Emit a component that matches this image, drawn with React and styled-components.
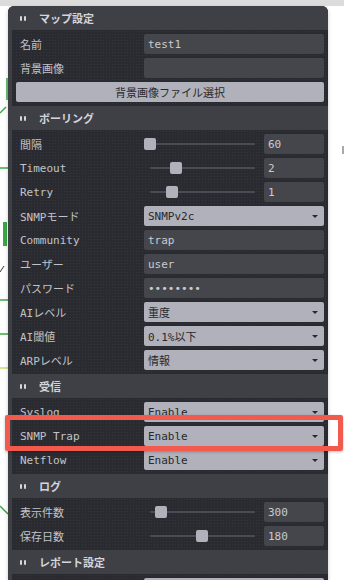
// Packages:
import React from 'react';
import styled, { createGlobalStyle } from 'styled-components';


// Constants:
const COLORS = {
  BASE: '#2a2b30',
  CONTAINER: '#3f4046',
  INPUT: '#45464c',
  BUTTON: '#b0b1ba',
  LABEL: '#c2c3c9',
  TEXT: '#c9cad0',
  TITLE: '#d4d5db',
  DARK: '#28292e',
  GROOVE: '#4b4c53',
  HIGHLIGHT: '#f35a4e',
};

const FONT = '"DejaVu Sans Mono", "Noto Sans CJK JP", monospace';


// Styles:
const GlobalStyle = createGlobalStyle`
  html, body {
    margin: 0;
    padding: 0;
    background: #ffffff;
  }
  * {
    box-sizing: border-box;
  }
`;

const Page = styled.div`
  position: relative;
  width: 344px;
  height: 580px;
  overflow: hidden;
  padding-top: 6px;
  background: linear-gradient(#dcdcdc 0 6px, #ffffff 6px);
  font-family: ${ FONT };
  font-size: 11px;
`;

const MapBackdrop = styled.svg`
  position: absolute;
  top: 0;
  left: 0;
  width: 344px;
  height: 580px;
`;

const Panel = styled.div`
  position: relative;
  width: 320px;
  margin-left: 8px;
  border-radius: 6px 6px 0 0;
  overflow: hidden;
  background: ${ COLORS.BASE };
  box-shadow: 0 2px 4px rgba(0, 0, 0, 0.2);
`;

const FolderHeader = styled.div`
  display: flex;
  align-items: center;
  height: 24px;
  padding-left: 12px;
  background: ${ COLORS.CONTAINER };
  color: ${ COLORS.TITLE };
  font-weight: 700;
`;

const FolderMark = styled.span`
  display: flex;
  gap: 2px;
  width: 6px;
  margin-right: 13px;

  &::before, &::after {
    content: '';
    width: 2px;
    height: 5px;
    border-radius: 1px;
    background: ${ COLORS.TITLE };
  }
`;

const FolderContent = styled.div`
  display: flex;
  flex-direction: column;
  gap: 4px;
  padding: 4px 0;
  border-left: 4px solid ${ COLORS.CONTAINER };
  background-color: ${ COLORS.BASE };
  background-image: radial-gradient(rgba(255, 255, 255, 0.05) 0.7px, transparent 0.9px);
  background-size: 3px 3px;
`;

const Row = styled.div`
  display: flex;
  align-items: center;
  height: 20px;
  padding: 0 4px 0 8px;
`;

const Label = styled.div`
  flex: 0 0 124px;
  color: ${ COLORS.LABEL };
  white-space: nowrap;
`;

const Value = styled.div`
  display: flex;
  align-items: center;
  flex: 1;
  height: 20px;
`;

const TextBox = styled.div`
  display: flex;
  align-items: center;
  width: ${ props => props.$width || '100%' };
  height: 20px;
  padding: 0 4px;
  border-radius: 2px;
  background: ${ COLORS.INPUT };
  color: ${ COLORS.TEXT };
  white-space: nowrap;
`;

const SelectBox = styled.div`
  display: flex;
  align-items: center;
  justify-content: space-between;
  width: 100%;
  height: 20px;
  padding: 0 6px 0 4px;
  border-radius: 2px;
  background: ${ COLORS.BUTTON };
  color: ${ COLORS.DARK };
  white-space: nowrap;
`;

const Arrow = styled.span`
  width: 0;
  height: 0;
  border-left: 3px solid transparent;
  border-right: 3px solid transparent;
  border-top: 3px solid ${ COLORS.DARK };
`;

const ButtonRow = styled.div`
  display: flex;
  height: 20px;
  padding: 0 4px;
`;

const Button = styled.div`
  display: flex;
  align-items: center;
  justify-content: center;
  width: 100%;
  border-radius: 2px;
  background: ${ COLORS.BUTTON };
  color: ${ COLORS.DARK };
`;

const Slider = styled.div`
  position: relative;
  width: 112px;
  height: 20px;
  margin-right: 8px;
`;

const Groove = styled.div`
  position: absolute;
  top: 9px;
  left: 6px;
  right: 1px;
  height: 2px;
  border-radius: 1px;
  background: ${ COLORS.GROOVE };
`;

const Knob = styled.div`
  position: absolute;
  top: 4px;
  left: calc(${ props => props.$pos } * (100% - 12px));
  width: 12px;
  height: 12px;
  border-radius: 2px;
  background: ${ COLORS.BUTTON };
`;

const Highlight = styled.div`
  position: absolute;
  top: 415px;
  left: 5px;
  width: 338px;
  height: 36px;
  border: 5px solid ${ COLORS.HIGHLIGHT };
  border-radius: 2px;
  box-shadow: 0 1px 3px rgba(0, 0, 0, 0.25);
`;


// Functions:
const Folder = ({ title, children }) => (
  <>
    <FolderHeader>
      <FolderMark />
      { title }
    </FolderHeader>
    <FolderContent>{ children }</FolderContent>
  </>
);

const TextRow = ({ label, value }) => (
  <Row>
    <Label>{ label }</Label>
    <Value><TextBox>{ value }</TextBox></Value>
  </Row>
);

const SelectRow = ({ label, value }) => (
  <Row>
    <Label>{ label }</Label>
    <Value>
      <SelectBox>{ value }<Arrow /></SelectBox>
    </Value>
  </Row>
);

const SliderRow = ({ label, value, pos }) => (
  <Row>
    <Label>{ label }</Label>
    <Value>
      <Slider>
        <Groove />
        <Knob $pos={ pos } />
      </Slider>
      <TextBox $width="60px">{ value }</TextBox>
    </Value>
  </Row>
);

const App = () => {
  // Return:
  return (
    <Page>
      <GlobalStyle />
      <MapBackdrop viewBox="0 0 344 580">
        <g stroke="#3aa845" strokeWidth="1.5" fill="none">
          <line x1="7" y1="78" x2="7" y2="100" />
          <line x1="0" y1="113" x2="6" y2="107" />
          <line x1="0" y1="168" x2="8" y2="168" />
          <line x1="5" y1="222" x2="5" y2="246" strokeWidth="4" />
          <line x1="0" y1="300" x2="8" y2="300" />
          <line x1="0" y1="334" x2="8" y2="334" />
          <line x1="6" y1="436" x2="6" y2="442" />
          <line x1="0" y1="506" x2="8" y2="514" />
        </g>
        <line x1="0" y1="368" x2="8" y2="368" stroke="#c9dc6a" strokeWidth="1.5" />
        <line x1="0" y1="272" x2="4" y2="266" stroke="#333" strokeWidth="1" />
        <line x1="343" y1="146" x2="343" y2="154" stroke="#555" strokeWidth="1" />
      </MapBackdrop>
      <Panel>
        <Folder title="マップ設定">
          <TextRow label="名前" value="test1" />
          <TextRow label="背景画像" value="" />
          <ButtonRow><Button>背景画像ファイル選択</Button></ButtonRow>
        </Folder>
        <Folder title="ボーリング">
          <SliderRow label="間隔" value="60" pos={ 0 } />
          <SliderRow label="Timeout" value="2" pos={ 0.26 } />
          <SliderRow label="Retry" value="1" pos={ 0.215 } />
          <SelectRow label="SNMPモード" value="SNMPv2c" />
          <TextRow label="Community" value="trap" />
          <TextRow label="ユーザー" value="user" />
          <TextRow label="パスワード" value="••••••••" />
          <SelectRow label="AIレベル" value="重度" />
          <SelectRow label="AI閾値" value="0.1%以下" />
          <SelectRow label="ARPレベル" value="情報" />
        </Folder>
        <Folder title="受信">
          <SelectRow label="Syslog" value="Enable" />
          <SelectRow label="SNMP Trap" value="Enable" />
          <SelectRow label="Netflow" value="Enable" />
        </Folder>
        <Folder title="ログ">
          <SliderRow label="表示件数" value="300" pos={ 0.11 } />
          <SliderRow label="保存日数" value="180" pos={ 0.52 } />
        </Folder>
        <Folder title="レポート設定">
          <SelectRow label="" value="" />
        </Folder>
      </Panel>
      <Highlight />
    </Page>
  );
};


// Exports:
export default App;
